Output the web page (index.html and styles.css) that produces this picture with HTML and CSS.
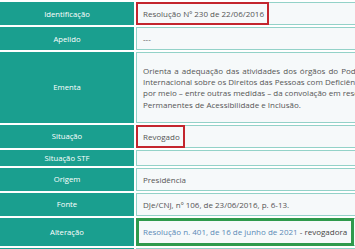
FILE: index.html
```html
<!DOCTYPE html>
<html lang="pt-BR">
<head>
<meta charset="utf-8">
<title>Resolução Nº 230</title>
<link rel="stylesheet" href="styles.css">
</head>
<body>
<table class="ficha">
  <tr><th>Identificação</th><td><div class="val hl red">Resolução Nº 230 de 22/06/2016</div></td></tr>
  <tr><th>Apelido</th><td><div class="val">---</div></td></tr>
  <tr><th>Ementa</th><td><div class="val ementa">
    <span class="ln first">Orienta a adequação das atividades dos órgãos do Poder Judiciário e de seus serviços auxiliares às determinações exaradas pela Convenção</span>
    <span class="ln">Internacional sobre os Direitos das Pessoas com Deficiência e pela Lei Brasileira de Inclusão da Pessoa com Deficiência, instituindo</span>
    <span class="ln">por meio – entre outras medidas – da convolação em resolução a Recomendação CNJ 27, de 16/12/2009, e da instituição de Comissões</span>
    <span class="ln">Permanentes de Acessibilidade e Inclusão.</span>
  </div></td></tr>
  <tr><th>Situação</th><td><div class="val hl red">Revogado</div></td></tr>
  <tr><th>Situação STF</th><td><div class="val empty"></div></td></tr>
  <tr><th>Origem</th><td><div class="val">Presidência</div></td></tr>
  <tr><th>Fonte</th><td><div class="val">DJe/CNJ, nº 106, de 23/06/2016, p. 6-13.</div></td></tr>
  <tr><th>Alteração</th><td><div class="val hl green tall"><a class="lnk" href="#">Resolução n. 401, de 16 de junho de 2021</a> - revogadora</div></td></tr>
  <tr><th>Legislação Correlata</th><td><div class="val">Lei nº 13.146, de 6 de julho de 2015</div></td></tr>
</table>
</body>
</html>
```

FILE: styles.css
```css
html, body {
  margin: 0;
  padding: 0;
  background: #ffffff;
  overflow: hidden;
}
body {
  font-family: "Open Sans", "DejaVu Sans", sans-serif;
  font-size: 8px;
}
.ficha {
  border-collapse: separate;
  border-spacing: 2px;
  margin-left: -2px;
  width: 740px;
  table-layout: fixed;
}
.ficha th {
  width: 134px;
  padding: 0;
  background: #1a9f8f;
  color: #ffffff;
  font-weight: 400;
  font-size: 7.7px;
  text-align: center;
  vertical-align: middle;
}
.ficha td {
  padding: 0;
  border: 1px solid #93d2c8;
  background: #f6f9fa;
  vertical-align: middle;
}
.val {
  padding: 5px 6px;
  line-height: 11px;
  color: #555555;
}
.hl {
  position: relative;
  width: fit-content;
  padding-right: 4px;
}
.hl::after {
  content: "";
  position: absolute;
  inset: -1px;
  border: 2px solid #c3262e;
}
.hl.green::after {
  border: 3px solid #2f9a4c;
}
.tall {
  padding-top: 7.5px;
  padding-bottom: 7.5px;
  padding-right: 6px;
  color: #444444;
}
.lnk {
  color: #5b89b6;
  text-decoration: none;
}
.empty {
  height: 14px;
  padding: 0;
}
.ementa {
  padding: 12px 6px;
  line-height: 11.2px;
}
.ln {
  display: block;
  white-space: nowrap;
}
.ln.first {
  word-spacing: 1px;
}
```
